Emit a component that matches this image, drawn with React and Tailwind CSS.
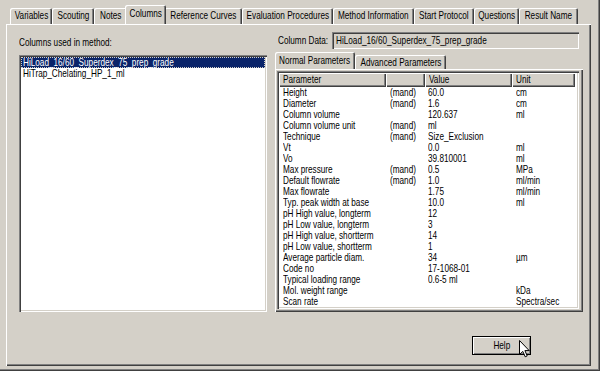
const FONT = { fontFamily: '"Liberation Sans", Arial, sans-serif' }

const TABS = [
  { label: 'Variables', w: 'w-[42px]' },
  { label: 'Scouting', w: 'w-[42px]' },
  { label: 'Notes', w: 'w-[33px]' },
  { label: 'Columns', w: 'w-[41px]', active: true },
  { label: 'Reference Curves', w: 'w-[78px]' },
  { label: 'Evaluation Procedures', w: 'w-[91px]' },
  { label: 'Method Information', w: 'w-[81px]' },
  { label: 'Start Protocol', w: 'w-[60px]' },
  { label: 'Questions', w: 'w-[45px]' },
  { label: 'Result Name', w: 'w-[59px]' },
]

const ROWS = [
  ['Height', '(mand)', '60.0', 'cm'],
  ['Diameter', '(mand)', '1.6', 'cm'],
  ['Column volume', '', '120.637', 'ml'],
  ['Column volume unit', '(mand)', 'ml', ''],
  ['Technique', '(mand)', 'Size_Exclusion', ''],
  ['Vt', '', '0.0', 'ml'],
  ['Vo', '', '39.810001', 'ml'],
  ['Max pressure', '(mand)', '0.5', 'MPa'],
  ['Default flowrate', '(mand)', '1.0', 'ml/min'],
  ['Max flowrate', '', '1.75', 'ml/min'],
  ['Typ. peak width at base', '', '10.0', 'ml'],
  ['pH High value, longterm', '', '12', ''],
  ['pH Low value, longterm', '', '3', ''],
  ['pH High value, shortterm', '', '14', ''],
  ['pH Low value, shortterm', '', '1', ''],
  ['Average particle diam.', '', '34', 'µm'],
  ['Code no', '', '17-1068-01', ''],
  ['Typical loading range', '', '0.6-5 ml', ''],
  ['Mol. weight range', '', '', 'kDa'],
  ['Scan rate', '', '', 'Spectra/sec'],
]

// the old dialog font is narrow, so squeeze Liberation Sans horizontally
function T({ children }) {
  return <span className="inline-block whitespace-nowrap origin-left scale-x-[0.78]">{children}</span>
}
function C({ children }) {
  return <span className="inline-block whitespace-nowrap origin-center scale-x-[0.78]">{children}</span>
}

function Tab({ label, w, active }) {
  if (active) {
    return (
      <div className={`${w} -mx-[2px] h-[19px] px-[2px] relative z-10 bg-[#d4d0c8] rounded-t-[2px] shadow-[inset_1px_1px_0_#ffffff,inset_-1px_0_0_#404040,inset_-2px_0_0_#808080] flex items-center justify-center pb-[1px]`}>
        <C>{label}</C>
      </div>
    )
  }
  return (
    <div className={`${w} h-[16px] bg-[#d4d0c8] rounded-t-[2px] shadow-[inset_1px_1px_0_#ffffff,inset_-1px_0_0_#404040,inset_-2px_0_0_#808080] flex items-center justify-center`}>
      <C>{label}</C>
    </div>
  )
}

function HeadCell({ w, children }) {
  return (
    <div className={`${w} h-[14px] shrink-0 bg-[#d4d0c8] shadow-[inset_1px_1px_0_#ffffff,inset_-1px_-1px_0_#404040,inset_-2px_-2px_0_#808080] pl-[4px] leading-[13px] overflow-hidden`}>
      <T>{children}</T>
    </div>
  )
}

function Cursor() {
  return (
    <svg className="absolute left-[519px] top-[340px]" width="11" height="18" viewBox="0 0 11 18">
      <path d="M0.5 0.5 L0.5 14.5 L3.8 11.4 L6.2 16.8 L8.2 15.9 L5.9 10.6 L10.2 10.6 Z" fill="#ffffff" stroke="#000000" strokeWidth="1" strokeLinejoin="miter" />
    </svg>
  )
}

export default function App() {
  return (
    <div style={FONT} className="relative w-[600px] h-[371px] overflow-hidden bg-[#d4d0c8] text-black text-[10.5px] border-r border-b border-[#404040]">
      <div className="w-[599px] h-[370px] border-r border-b border-[#808080] pt-[7px]">
        {/* tab strip */}
        <div className="flex items-end pl-[10px] h-[17px]">
          {TABS.map(t => <Tab key={t.label} {...t} />)}
        </div>

        {/* tab page */}
        <div className="ml-[6px] w-[585px] h-[342px] bg-[#d4d0c8] shadow-[inset_1px_1px_0_#ffffff,inset_-1px_-1px_0_#404040,inset_-2px_-2px_0_#808080] pt-[8px] pl-[13px]">
          <div className="flex gap-[8px]">
            {/* left: columns list */}
            <div className="w-[248px] shrink-0">
              <div className="mt-[5px] h-[11px] leading-[11px]"><T>Columns used in method:</T></div>
              <div className="mt-[7px] h-[257px] bg-white shadow-[inset_1px_1px_0_#808080,inset_2px_2px_0_#404040,inset_-1px_-1px_0_#ffffff,inset_-2px_-2px_0_#d4d0c8] p-[2px]">
                <div className="h-[11px] bg-[#0a246a] text-white leading-[11px] pl-[2px] outline outline-1 outline-dotted outline-[#d4d0c8] -outline-offset-1">
                  <T>HiLoad_16/60_Superdex_75_prep_grade</T>
                </div>
                <div className="h-[11px] leading-[11px] pl-[2px]"><T>HiTrap_Chelating_HP_1_ml</T></div>
              </div>
            </div>

            {/* right: column data */}
            <div className="w-[308px] shrink-0">
              <div className="flex items-center h-[17px]">
                <span className="w-[57px] pl-[3px] leading-[11px]"><T>Column Data:</T></span>
                <div className="w-[247px] h-[17px] bg-[#d4d0c8] shadow-[inset_1px_1px_0_#808080,inset_2px_2px_0_#404040,inset_-1px_-1px_0_#ffffff,inset_-2px_-2px_0_#d4d0c8] pl-[4px] leading-[17px]">
                  <T>HiLoad_16/60_Superdex_75_prep_grade</T>
                </div>
              </div>

              <div className="mt-[5px] flex items-end h-[15px]">
                <div className="w-[80px] h-[17px] relative z-10 bg-[#d4d0c8] rounded-t-[2px] shadow-[inset_1px_1px_0_#ffffff,inset_-1px_0_0_#404040,inset_-2px_0_0_#808080] flex items-center justify-center leading-[11px]">
                  <C>Normal Parameters</C>
                </div>
                <div className="w-[91px] h-[14px] bg-[#d4d0c8] rounded-t-[2px] shadow-[inset_1px_1px_0_#ffffff,inset_-1px_0_0_#404040,inset_-2px_0_0_#808080] flex items-center justify-center leading-[11px]">
                  <C>Advanced Parameters</C>
                </div>
              </div>

              <div className="h-[243px] bg-[#d4d0c8] shadow-[inset_1px_1px_0_#ffffff,inset_-1px_-1px_0_#404040,inset_-2px_-2px_0_#808080] pt-[2px] pl-[2px] pr-[4px] pb-[3px]">
                <div className="h-[238px] bg-white shadow-[inset_1px_1px_0_#808080,inset_2px_2px_0_#404040,inset_-1px_-1px_0_#ffffff,inset_-2px_-2px_0_#d4d0c8] p-[2px]">
                  <div className="flex">
                    <HeadCell w="w-[107px]">Parameter</HeadCell>
                    <HeadCell w="w-[39px]"></HeadCell>
                    <HeadCell w="w-[87px]">Value</HeadCell>
                    <HeadCell w="w-[63px]">Unit</HeadCell>
                  </div>
                  {ROWS.map(r => (
                    <div key={r[0]} className="flex h-[11px] leading-[11px]">
                      <span className="w-[107px] shrink-0 pl-[4px]"><T>{r[0]}</T></span>
                      <span className="w-[39px] shrink-0 pl-[4px]"><T>{r[1]}</T></span>
                      <span className="w-[87px] shrink-0 pl-[3px]"><T>{r[2]}</T></span>
                      <span className="w-[63px] shrink-0 pl-[4px]"><T>{r[3]}</T></span>
                    </div>
                  ))}
                </div>
              </div>
            </div>
          </div>

          {/* footer */}
          <div className="flex justify-end pr-[60px] mt-[24px]">
            <div className="w-[59px] h-[19px] border border-black bg-[#d4d0c8] shadow-[inset_1px_1px_0_#ffffff,inset_-1px_-1px_0_#808080] flex items-center justify-center leading-[11px]">
              <C>Help</C>
            </div>
          </div>
        </div>
      </div>
      <Cursor />
    </div>
  )
}
